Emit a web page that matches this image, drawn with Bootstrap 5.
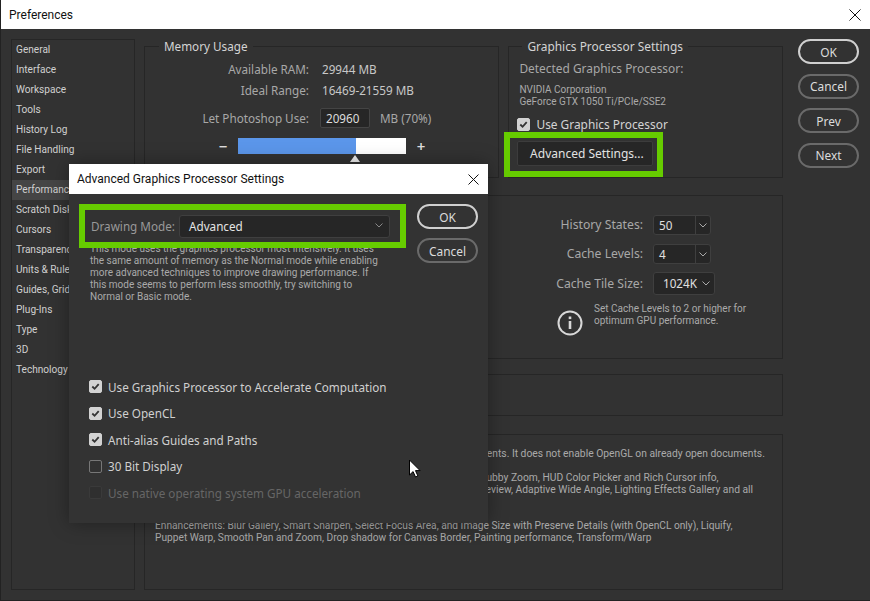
<!DOCTYPE html>
<html lang="en">
<head>
<meta charset="utf-8">
<title>Preferences</title>
<link href="https://cdn.jsdelivr.net/npm/bootstrap@5.3.0/dist/css/bootstrap.min.css" rel="stylesheet">
<style>
html,body{margin:0;background:#323232;overflow:hidden}
body{font-family:"Noto Sans","Liberation Sans",sans-serif;font-size:11.7px;line-height:16px;color:#c8c8c8}
.ps-win{width:870px;height:601px;background:#323232;position:relative;border-left:1px solid #222;border-bottom:1px solid #222;overflow:hidden}
.ps-titlebar{height:29px;background:#fff;color:#111;font-family:Roboto,sans-serif;font-size:12px;padding-left:8px}
.ps-main{height:571px}
.ps-side{width:124px;height:551px;margin:10px 0 0 10px;border:1px solid #262626;font-family:Roboto,sans-serif;font-size:10.1px;color:#d0d0d0;flex:none}
.ps-side-item{height:20px;line-height:20px;padding-left:4px;white-space:nowrap}
.ps-side-item.is-active{background:#454545}
.ps-panels{width:639px;margin:17px 0 0 9px;flex:none}
.ps-box{border:1px solid #262626;position:relative}
.ps-mem{width:356px;height:132px}
.ps-gpu{width:275px;height:132px;margin-left:9px}
.ps-hist{height:164px;margin-top:17px}
.ps-empty{height:42px;margin-top:15px}
.ps-desc{height:156px;margin-top:18px;padding:13px 10px;font-family:Roboto,sans-serif;font-size:10.3px;line-height:12px;color:#aaa;white-space:nowrap}
.ps-legend{position:absolute;top:-9px;background:#323232;padding:0 5px;color:#d4d4d4;line-height:16px;white-space:nowrap}
.ps-gpu .ps-legend{font-size:11.9px}
.ps-val{color:#c8c8c8}
.ps-mem-grid{padding:11px 0 0 0}
.ps-memrow{height:21px;align-items:center}
.ps-memlab{width:164px;text-align:right;margin-right:13px;color:#a8a8a8}
.ps-memrow-use{margin-top:7px}
.ps-memrow-use .ps-memlab{margin-right:11px}
.ps-unit{color:#a8a8a8}
.ps-num{width:50px;height:20px;background:#262626;border:1px solid #444;color:#ddd;padding-left:5px;line-height:18px;margin-right:10px;border-radius:2px}
.ps-slider{margin:10px 0 0 68px;align-items:center}
.ps-pm{width:20px;text-align:center;font-size:15px;color:#ddd;line-height:14px;font-weight:600}
.ps-track{width:168px;height:16px;border-radius:0;background:#fff;margin:0 5px 0 5px;position:relative}
.ps-track .progress-bar{background:#5b96ea}
.ps-tri{position:absolute;left:205px;top:108px;width:0;height:0;border:5px solid transparent;border-bottom:7px solid #eee;border-top:0}
.ps-gpu-in{padding:13px 0 0 10px;color:#a8a8a8;font-size:11.9px}
.ps-small{font-family:Roboto,sans-serif;font-size:10px;line-height:12px;color:#aaa;margin-top:8px}
.ps-check{margin-top:8px;gap:6px;color:#d4d4d4;align-items:center;height:16px;margin-left:-2px}
.form-check-input.ps-box-in{width:13px;height:13px;margin:0;border-radius:2px;background-color:#323232;border:1px solid #777;flex:none;box-shadow:none}
.form-check-input.ps-box-in:checked{background-color:#d2d2d2;border-color:#d2d2d2;background-size:11px;background-image:url("data:image/svg+xml,%3csvg xmlns='http://www.w3.org/2000/svg' viewBox='0 0 12 12'%3e%3cpath fill='none' stroke='%23333' stroke-width='2' d='M2.5 6l2.5 2.5 4.5-5'/%3e%3c/svg%3e")}
.form-check-input.ps-box-in:disabled{opacity:1;background-color:#2f2f2f;border-color:#3a3a3a}
.ps-green{border:6px solid #66cc00;background:#323232}
.ps-advwrap{width:159px;height:45px;padding:3px 4px 5px 7px;margin:0 0 0 -15px}
.ps-advbtn{width:136px;height:25px;background:#262626;border:1px solid #3c3c3c;color:#e2e2e2;border-radius:2px;font-size:12px;line-height:16px;padding:0 0 0 3px}
.ps-btns{width:61px;margin:10px 0 0 15px;gap:9.5px;flex:none}
.ps-pill{width:61px;height:25px;border-radius:13px;border:2px solid #6a6a6a;background:transparent;color:#dcdcdc;padding:0;font-size:11.9px;line-height:16px}
.ps-pill.is-default{border-color:#d0d0d0}
.ps-combo{height:20px;background:#262626;border:1px solid #3f3f3f;border-radius:3px;color:#e0e0e0;line-height:18px}
.ps-combo-v{flex:1;padding-left:5px}
.ps-tile{padding-left:9px}
.ps-combo-a{width:15px;border-left:1px solid #3f3f3f}
.ps-histrow{gap:10px;align-items:center;justify-content:flex-end}
.ps-histrow-a{width:203px}
.ps-histrow-b{width:203px;margin-top:9px}
.ps-histrow-c{width:207px;margin-top:8px}
.ps-combo-s{width:58px}
.ps-combo-l{width:62px;height:23px;line-height:21px}
.ps-histlab{color:#a8a8a8;text-align:right;font-size:12.2px}
.ps-histcol{position:absolute;left:363px;top:19px;width:280px}
.ps-info{margin:8px 0 0 49px;gap:11px}
.ps-info svg{margin-top:7px;flex:none}
.ps-note{font-family:Roboto,sans-serif;font-size:10px;line-height:12px;color:#aaa;white-space:nowrap}
.ps-gap12{margin-top:12px}
.ps-gap24{margin-top:24px;font-size:10.2px}
.ps-dialog{position:absolute;left:68px;top:164px;width:419px;height:359px;background:#333;box-shadow:0 0 18px rgba(0,0,0,.35);z-index:5}
.ps-dtitle{height:30px;background:#fff;color:#111;font-family:Roboto,sans-serif;font-size:12px;padding-left:8px}
.ps-dx{margin-right:9px}
.ps-dleft{width:327px;margin:10px 0 0 10px;flex:none}
.ps-drawrow{height:44px;position:relative;z-index:1;align-items:center;padding-left:6px;color:#999;gap:5px;overflow:visible}
.ps-drawlab{width:83px;white-space:nowrap;flex:none}
.ps-drawsel{width:211px;height:23px;background:#262626;border:1px solid #3f3f3f;border-radius:3px;color:#e4e4e4;padding:0 6px 1px 9px}
.ps-dtext{font-family:Roboto,sans-serif;font-size:10px;line-height:12px;color:#aaa;margin:-5px 0 0 11px;white-space:nowrap;height:130.7px}
.ps-dchecks{margin:0 0 0 10px}
.ps-dcheck{height:26.5px;gap:6px;color:#d0d0d0;white-space:nowrap;align-items:center}
.ps-dcheck.is-off{color:#666}
.ps-dbtns{width:61px;margin:10px 0 0 11px;gap:9px;flex:none}
.ps-cursor{position:absolute;left:407px;top:459px;z-index:6}
.ps-tx{margin-right:9px}
.ps-l14{left:14px}
.ps-l13{left:13px}
</style>
</head>
<body>
<div class="ps-win">
  <div class="ps-titlebar d-flex align-items-center justify-content-between">
    <span>Preferences</span>
    <svg class="ps-tx" width="12" height="12" viewBox="0 0 12 12"><path d="M.5.5l11 11M11.5.5l-11 11" stroke="#111" fill="none"/></svg>
  </div>
  <div class="ps-main d-flex">
    <nav class="ps-side">
      <div class="ps-side-item">General</div>
      <div class="ps-side-item">Interface</div>
      <div class="ps-side-item">Workspace</div>
      <div class="ps-side-item">Tools</div>
      <div class="ps-side-item">History Log</div>
      <div class="ps-side-item">File Handling</div>
      <div class="ps-side-item">Export</div>
      <div class="ps-side-item is-active">Performance</div>
      <div class="ps-side-item">Scratch Disks</div>
      <div class="ps-side-item">Cursors</div>
      <div class="ps-side-item">Transparency &amp; Gamut</div>
      <div class="ps-side-item">Units &amp; Rulers</div>
      <div class="ps-side-item">Guides, Grid &amp; Slices</div>
      <div class="ps-side-item">Plug-Ins</div>
      <div class="ps-side-item">Type</div>
      <div class="ps-side-item">3D</div>
      <div class="ps-side-item">Technology Previews</div>
    </nav>
    <div class="ps-panels">
      <div class="d-flex">
        <section class="ps-box ps-mem">
          <span class="ps-legend ps-l14">Memory Usage</span>
          <div class="ps-mem-grid">
            <div class="d-flex ps-memrow"><span class="ps-memlab">Available RAM:</span><span class="ps-val">29944 MB</span></div>
            <div class="d-flex ps-memrow"><span class="ps-memlab">Ideal Range:</span><span class="ps-val">16469-21559 MB</span></div>
            <div class="d-flex ps-memrow ps-memrow-use"><span class="ps-memlab">Let Photoshop Use:</span><span class="ps-num">20960</span><span class="ps-unit">MB (70%)</span></div>
          </div>
          <div class="d-flex ps-slider">
            <span class="ps-pm">−</span>
            <div class="progress ps-track"><div class="progress-bar" style="width:70%"></div></div>
            <span class="ps-pm">+</span>
          </div>
          <span class="ps-tri"></span>
        </section>
        <section class="ps-box ps-gpu">
          <span class="ps-legend ps-l13">Graphics Processor Settings</span>
          <div class="ps-gpu-in">
            <div>Detected Graphics Processor:</div>
            <div class="ps-small">NVIDIA Corporation<br>GeForce GTX 1050 Ti/PCIe/SSE2</div>
            <label class="d-flex ps-check"><input class="form-check-input ps-box-in" type="checkbox" checked>Use Graphics Processor</label>
            <div class="ps-green ps-advwrap"><button class="btn ps-advbtn" type="button">Advanced Settings...</button></div>
          </div>
        </section>
      </div>
      <section class="ps-box ps-hist">
        <div class="ps-histcol d-flex flex-column">
          <div class="d-flex ps-histrow ps-histrow-a"><span class="ps-histlab">History States:</span><div class="ps-combo ps-combo-s d-flex"><span class="ps-combo-v">50</span><span class="ps-combo-a d-flex align-items-center justify-content-center"><svg width="8" height="5" viewBox="0 0 8 5"><path d="M.5.5L4 4 7.5.5" fill="none" stroke="#aaa"/></svg></span></div></div>
          <div class="d-flex ps-histrow ps-histrow-b"><span class="ps-histlab">Cache Levels:</span><div class="ps-combo ps-combo-s d-flex"><span class="ps-combo-v">4</span><span class="ps-combo-a d-flex align-items-center justify-content-center"><svg width="8" height="5" viewBox="0 0 8 5"><path d="M.5.5L4 4 7.5.5" fill="none" stroke="#aaa"/></svg></span></div></div>
          <div class="d-flex ps-histrow ps-histrow-c"><span class="ps-histlab">Cache Tile Size:</span><div class="ps-combo ps-combo-l d-flex"><span class="ps-combo-v ps-tile">1024K</span><span class="d-flex align-items-center pe-1"><svg width="8" height="5" viewBox="0 0 8 5"><path d="M.5.5L4 4 7.5.5" fill="none" stroke="#aaa"/></svg></span></div></div>
          <div class="d-flex ps-info">
            <svg width="26" height="26" viewBox="0 0 26 26"><circle cx="13" cy="13" r="11.5" fill="none" stroke="#d8d8d8" stroke-width="2"/><rect x="11.7" y="11" width="2.6" height="8" fill="#d8d8d8"/><rect x="11.7" y="6.5" width="2.6" height="2.6" fill="#d8d8d8"/></svg>
            <div class="ps-note">Set Cache Levels to 2 or higher for<br>optimum GPU performance.</div>
          </div>
        </div>
      </section>
      <section class="ps-box ps-empty"></section>
      <section class="ps-box ps-desc">
        <div>Note: Enabling the Graphics Processor only affects newly opened documents. It does not enable OpenGL on already open documents.</div>
        <div class="ps-gap12">Required: Fast Rotate View, Birds Eye Zoom, Pixel Grid, Flick Panning, Scrubby Zoom, HUD Color Picker and Rich Cursor info,<br>Sampling Ring, On-Canvas Brush Resizing, Oil Paint, Liquify, Bristle Tip Preview, Adaptive Wide Angle, Lighting Effects Gallery and all</div>
        <div class="ps-gap24">Enhancements: Blur Gallery, Smart Sharpen, Select Focus Area, and Image Size with Preserve Details (with OpenCL only), Liquify,<br>Puppet Warp, Smooth Pan and Zoom, Drop shadow for Canvas Border, Painting performance, Transform/Warp</div>
      </section>
    </div>
    <div class="ps-btns d-flex flex-column">
      <button class="btn ps-pill is-default" type="button">OK</button>
      <button class="btn ps-pill" type="button">Cancel</button>
      <button class="btn ps-pill" type="button">Prev</button>
      <button class="btn ps-pill" type="button">Next</button>
    </div>
  </div>

  <div class="ps-dialog">
    <div class="ps-dtitle d-flex align-items-center justify-content-between">
      <span>Advanced Graphics Processor Settings</span>
      <svg class="ps-dx" width="11" height="11" viewBox="0 0 11 11"><path d="M.5.5l10 10M10.5.5l-10 10" stroke="#111" fill="none"/></svg>
    </div>
    <div class="d-flex">
      <div class="ps-dleft">
        <div class="ps-green ps-drawrow d-flex">
          <span class="ps-drawlab">Drawing Mode:</span>
          <div class="ps-drawsel d-flex align-items-center justify-content-between"><span>Advanced</span><svg width="8" height="5" viewBox="0 0 8 5"><path d="M.5.5L4 4 7.5.5" fill="none" stroke="#888"/></svg></div>
        </div>
        <div class="ps-dtext">This mode uses the graphics processor most intensively.  It uses<br>the same amount of memory as the Normal mode while enabling<br>more advanced techniques to improve drawing performance.  If<br>this mode seems to perform less smoothly, try switching to<br>Normal or Basic mode.</div>
        <div class="ps-dchecks">
          <label class="d-flex ps-dcheck"><input class="form-check-input ps-box-in" type="checkbox" checked>Use Graphics Processor to Accelerate Computation</label>
          <label class="d-flex ps-dcheck"><input class="form-check-input ps-box-in" type="checkbox" checked>Use OpenCL</label>
          <label class="d-flex ps-dcheck"><input class="form-check-input ps-box-in" type="checkbox" checked>Anti-alias Guides and Paths</label>
          <label class="d-flex ps-dcheck"><input class="form-check-input ps-box-in" type="checkbox">30 Bit Display</label>
          <label class="d-flex ps-dcheck is-off"><input class="form-check-input ps-box-in" type="checkbox" disabled>Use native operating system GPU acceleration</label>
        </div>
      </div>
      <div class="ps-dbtns d-flex flex-column">
        <button class="btn ps-pill is-default" type="button">OK</button>
        <button class="btn ps-pill" type="button">Cancel</button>
      </div>
    </div>
  </div>
  <svg class="ps-cursor" width="13" height="19" viewBox="0 0 13 19"><path d="M1.5 1v15l3.6-3.4 2.4 5.4 2.4-1-2.4-5.4h4.6z" fill="#fff" stroke="#000"/></svg>
</div>
</body>
</html>
